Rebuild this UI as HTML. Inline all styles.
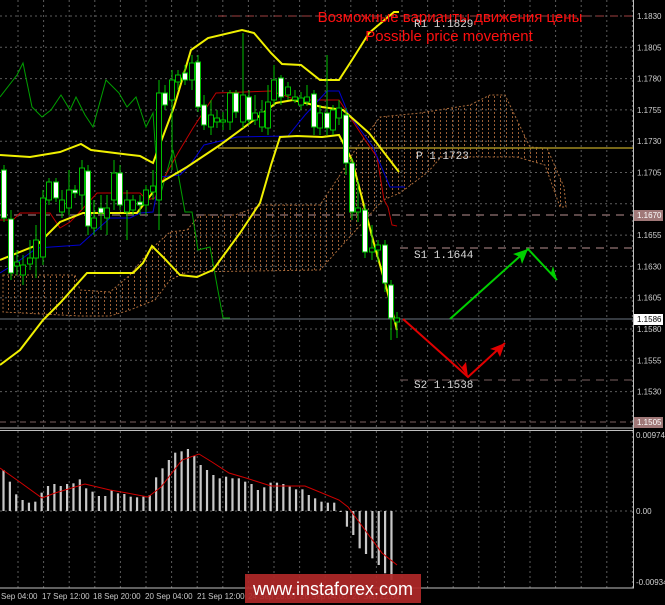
<!DOCTYPE html>
<html><head><meta charset="utf-8"><style>
html,body{margin:0;padding:0;background:#000;width:665px;height:605px;overflow:hidden}
svg{display:block}
text{font-family:"Liberation Sans",sans-serif}
text.m{font-family:"Liberation Mono",monospace}
</style></head><body>
<svg id="s" width="665" height="605" viewBox="0 0 665 605" xmlns="http://www.w3.org/2000/svg">
<defs>
<pattern id="cl" width="6" height="4" patternUnits="userSpaceOnUse">
<rect x="2" y="0" width="1" height="2" fill="#9a5e34"/>
</pattern>
</defs>
<rect width="665" height="605" fill="#000"/>
<g id="grid"></g>
<polygon fill="url(#cl)" stroke="#a86a3a" stroke-width="1" stroke-dasharray="2 2" points="3,275 75,275 80,290 110,292 130,275 150,250 170,232 187,230 200,215 235,215 262,205 320,205 340,175 355,150 380,117 420,113 470,105 490,95 505,95 530,147 547,148 564,187 566,207 560,207 545,165 517,157 441,157 428,172 400,193 383,200 320,270 187,272 170,280 155,300 130,310 110,316 80,316 3,312"/>
<line x1="218" y1="16" x2="633" y2="16" stroke="#a04040" stroke-dasharray="8 6"/>
<line x1="218" y1="148" x2="633" y2="148" stroke="#a08a20" stroke-width="1.5"/>
<line x1="0" y1="215" x2="633" y2="215" stroke="#7a6060" stroke-width="1.5" stroke-dasharray="8 6"/>
<line x1="400" y1="248" x2="633" y2="248" stroke="#7a6060" stroke-width="1.5" stroke-dasharray="8 6"/>
<line x1="400" y1="380" x2="633" y2="380" stroke="#7a6060" stroke-width="1" stroke-dasharray="8 6"/>
<line x1="0" y1="422" x2="633" y2="422" stroke="#7a6060" stroke-width="1" stroke-dasharray="6 4"/>
<line x1="0" y1="319" x2="633" y2="319" stroke="#6a7480" stroke-width="1"/>
<polyline fill="none" stroke="#00a000" stroke-width="1" points="0,97 17,75 23,63 32,107 42,117 51,110 61,95 70,110 76,97 85,115 93,127 106,80 119,93 127,107 136,97 146,127 153,113 159,200 173,150 178,173 185,212 192,212 198,250 210,247 223,318 230,318"/>
<polyline fill="none" stroke="#c00000" stroke-width="1" points="0,220 13,220 20,213 50,213 60,228 70,222 77,215 97,193 140,193 147,200 155,198 159,187 178,153 193,128 216,93 271,91 297,100 339,100 365,140 377,157 384,200 388,207 392,225 397,226"/>
<polyline fill="none" stroke="#0000d0" stroke-width="1" points="0,273 13,265 37,248 80,245 110,218 130,218 140,213 153,212 160,177 180,175 190,165 204,145 237,137 288,136 305,115 327,91 339,91 348,113 373,147 390,187 405,187"/>
<polyline fill="none" stroke="#f0f000" stroke-width="2" points="0,155 30,157 60,152 81,144 91,150 123,154 140,156 153,163 174,107 191,50 208,38 242,30 254,33 271,53 282,64 301,65 320,80 339,80 352,60 369,33 394,12 399,12"/>
<polyline fill="none" stroke="#f0f000" stroke-width="2" points="0,260 37,245 60,222 83,213 137,213 160,183 187,167 220,145 254,120 276,103 293,100 322,107 343,110 369,133 399,172"/>
<polyline fill="none" stroke="#f0f000" stroke-width="2" points="0,365 20,350 43,320 60,303 87,273 133,273 143,263 152,246 163,257 180,275 197,277 213,270 240,233 260,203 271,165 280,137 297,136 322,137 339,135 352,160 373,240 387,290 397,330"/>
<g id="candles"></g>
<g stroke-width="2" fill="none">
<polyline stroke="#e00000" points="403,319 468,377 505,343"/>
<polyline stroke="#00d000" points="450,319 528,249 557,280"/>
</g>
<polygon fill="#e00000" points="468,377 455,360 462,367 466,362"/>
<polygon fill="#e00000" points="505,343 490,349 497,351 500,357"/>
<polygon fill="#00d000" points="528,249 513,254 520,257 522,264"/>
<polygon fill="#00d000" points="557,280 545,266 551,273 553,266"/>
<text x="450" y="22" fill="#ff1010" font-size="15" text-anchor="middle">Возможные варианты движения цены</text>
<text x="449" y="41" fill="#ff1010" font-size="15" text-anchor="middle">Possible price movement</text>
<g font-size="11" fill="#d8d8d8">
<text class="m" x="414" y="27">R1 1.1829</text>
<text class="m" x="416" y="159">P 1.1723</text>
<text class="m" x="414" y="258">S1 1.1644</text>
<text class="m" x="414" y="388">S2 1.1538</text>
</g>
<line x1="633.5" y1="0" x2="633.5" y2="588" stroke="#c0c0c0"/>
<line x1="0" y1="428" x2="634" y2="428" stroke="#c0c0c0"/>
<line x1="0" y1="430.5" x2="634" y2="430.5" stroke="#c0c0c0"/>
<line x1="0" y1="588" x2="634" y2="588" stroke="#c0c0c0"/>
<g id="macd"></g>
<polyline fill="none" stroke="#d00000" stroke-width="1" points="0,468 17,480 42,498 55,493 85,484 110,490 127,493 148,497 161,487 182,460 199,454 212,462 229,473 246,478 271,486 305,486 322,493 339,500 348,507 365,530 382,553 397,565"/>
<g id="axis" font-size="8" fill="#d0d0d0"></g>
<g font-size="8" fill="#c8c8c8">
<text x="1" y="599">Sep 04:00</text>
<text x="42" y="599">17 Sep 12:00</text>
<text x="93" y="599">18 Sep 20:00</text>
<text x="145" y="599">20 Sep 04:00</text>
<text x="197" y="599">21 Sep 12:00</text>
<text x="248" y="599">24 Sep 20:00</text>
<text x="300" y="599">26 Sep 04:00</text>
<text x="352" y="599">27 Sep 12:00</text>
</g>
<rect x="245" y="574" width="176" height="29" fill="#b02828" opacity="0.92"/>
<text x="333" y="595" fill="#fff" font-size="18" text-anchor="middle">www.instaforex.com</text>
</svg>
<script>
var NS="http://www.w3.org/2000/svg";
function el(p,t,a){var e=document.createElementNS(NS,t);for(var k in a)e.setAttribute(k,a[k]);p.appendChild(e);return e;}
var g=document.getElementById('grid');
for(var x=18;x<633;x+=25.6){el(g,'line',{x1:x,y1:0,x2:x,y2:428,stroke:'#5c5c5c','stroke-dasharray':'2 3'});el(g,'line',{x1:x,y1:431,x2:x,y2:588,stroke:'#5c5c5c','stroke-dasharray':'2 3'});}
var ax=document.getElementById('axis');
var labs=['1.1830','1.1805','1.1780','1.1755','1.1730','1.1705','1.1680','1.1655','1.1630','1.1605','1.1580','1.1555','1.1530'];
for(var i=0;i<labs.length;i++){var y=16+i*31.3;el(g,'line',{x1:0,y1:y,x2:633,y2:y,stroke:'#5c5c5c','stroke-dasharray':'2 3'});
if(labs[i]!='1.1680'){var t=el(ax,'text',{x:637,y:y+3});t.textContent=labs[i];}}
el(g,'line',{x1:0,y1:511,x2:633,y2:511,stroke:'#5c5c5c','stroke-dasharray':'2 3'});
function box(y,txt,bg,fg){el(ax,'rect',{x:634,y:y-5,width:29,height:11,fill:bg});var t=el(ax,'text',{x:637,y:y+3,fill:fg});t.textContent=txt;}
box(215,'1.1670','#a07878','#fff');box(319,'1.1586','#fff','#000');box(422,'1.1505','#a07878','#fff');
[['0.00974',438],['0.00',514],['-0.00934',585]].forEach(function(a){var t=el(ax,'text',{x:636,y:a[1]});t.textContent=a[0];});
var C=[[4,170,218,165,222,1],[11,219,273,210,280,1],[17,262,266,250,275,0],[23,265,275,255,285,0],[30,258,264,240,270,0],[36,240,258,225,278,0],[43,198,257,190,265,0],[49,182,200,178,205,0],[56,182,198,178,202,1],[62,200,212,190,218,0],[69,190,208,170,215,0],[75,190,193,185,198,1],[82,168,195,160,210,0],[88,171,226,165,235,1],[94,218,228,200,235,0],[101,208,213,195,230,1],[107,208,218,195,235,0],[114,173,200,160,210,0],[120,173,205,165,210,1],[127,200,212,190,240,0],[133,200,210,195,215,0],[140,202,205,195,215,1],[146,190,205,185,215,0],[153,186,192,170,200,0],[159,93,200,80,230,0],[165,93,105,85,110,1],[172,80,100,70,170,0],[178,75,82,70,90,0],[185,73,80,65,85,1],[192,63,80,55,90,0],[198,62,107,55,112,1],[204,105,125,95,130,1],[211,115,127,100,135,0],[217,118,122,110,128,0],[223,120,122,112,130,0],[230,93,122,90,130,0],[236,93,112,90,118,1],[243,95,122,33,128,0],[249,97,120,90,125,1],[255,113,120,95,125,0],[262,112,127,100,132,0],[268,102,128,85,135,0],[274,80,100,65,105,0],[281,78,97,75,105,1],[288,87,95,82,100,0],[295,97,100,90,103,0],[301,98,105,92,110,0],[307,97,102,85,106,0],[314,94,127,90,135,1],[320,113,128,105,135,0],[327,113,128,55,135,1],[333,110,130,105,135,0],[339,108,118,100,125,0],[346,115,163,108,175,1],[352,163,212,158,220,1],[358,208,212,180,222,0],[365,210,252,205,258,1],[372,248,252,225,260,0],[378,245,250,240,262,0],[385,245,283,240,292,1],[391,285,318,280,340,1],[397,318,322,312,338,0]];
var cg=document.getElementById('candles');
C.forEach(function(c){el(cg,'line',{x1:c[0],y1:c[3],x2:c[0],y2:c[4],stroke:'#00c000'});
el(cg,'rect',{x:c[0]-2.5,y:c[1],width:5,height:Math.max(1,c[2]-c[1]),fill:c[5]?'#fff':'#000',stroke:'#00c000','stroke-width':1});});
var M=[270,305,343,360,368,365,338,318,312,318,312,310,298,325,335,348,348,330,340,342,350,352,350,345,292,265,240,218,214,207,228,255,270,285,295,290,295,295,305,312,330,322,308,308,312,320,328,328,345,355,365,368,368,395,440,465,505,522,535,555,580,600];
var mg=document.getElementById('macd');
M.forEach(function(v,i){var x=3.4+6.36*i;var y=380+v/3;var z=511;el(mg,'rect',{x:x-1,y:Math.min(y,z),width:2.2,height:Math.max(1,Math.abs(z-y)),fill:'#c8c8c8'});});
</script>
</body></html>
